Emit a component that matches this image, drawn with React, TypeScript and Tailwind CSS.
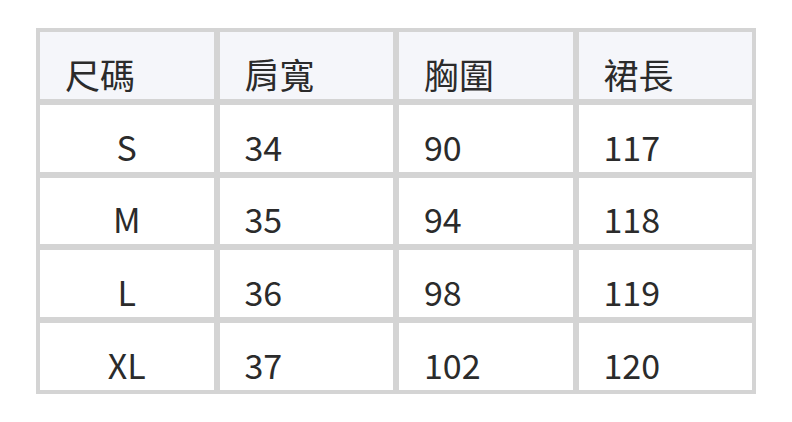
const headers = ["尺碼", "肩寬", "胸圍", "裙長"];

const rows = [
  ["S", "34", "90", "117"],
  ["M", "35", "94", "118"],
  ["L", "36", "98", "119"],
  ["XL", "37", "102", "120"],
];

export default function App() {
  return (
    <div
      className="w-[792px] h-[422px] bg-white pt-[28px] pl-[36px] text-[#2b2b2b]"
      style={{ fontFamily: '"Noto Sans CJK TC", "Noto Sans", sans-serif' }}
    >
      <div className="w-[720px] h-[366px] bg-[#d4d4d4] p-[4px] grid grid-cols-4 grid-rows-5 gap-[6px] text-[34px] leading-[48px]">
        {headers.map((h) => (
          <div key={h} className="bg-[#f5f6fa] flex items-end pl-[25px] pb-[1px] text-[35px]">
            {h}
          </div>
        ))}
        {rows.map((r) =>
          r.map((cell, i) => (
            <div
              key={r[0] + i}
              className={
                i === 0
                  ? "bg-white flex items-end justify-center pb-[1px]"
                  : "bg-white flex items-end pl-[25px] pb-[1px]"
              }
            >
              {cell}
            </div>
          ))
        )}
      </div>
    </div>
  );
}
